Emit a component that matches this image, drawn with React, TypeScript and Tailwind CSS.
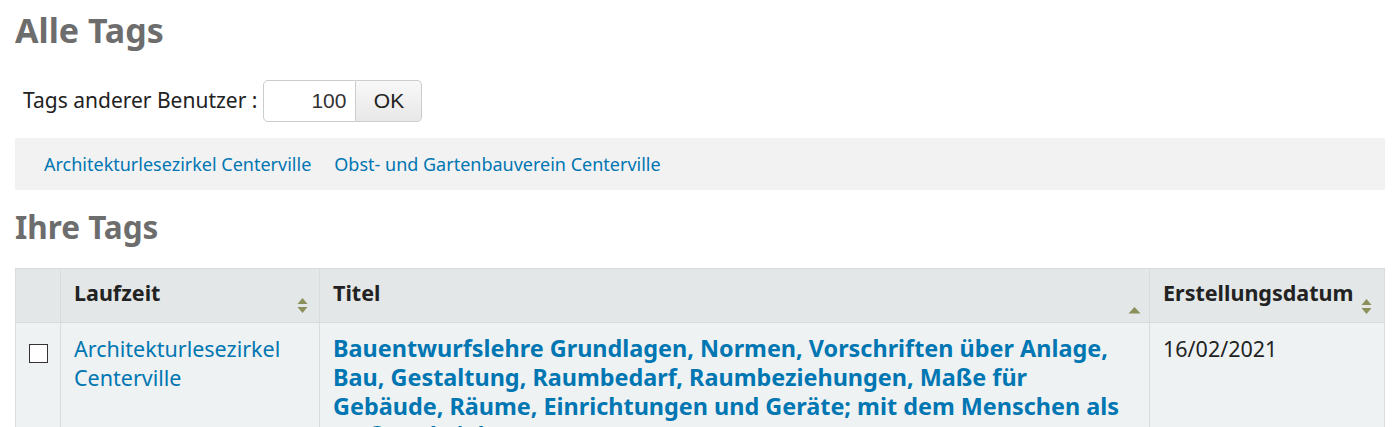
import React from "react";

const SortBoth = () => (
  <svg width="11" height="17" viewBox="0 0 11 17" className="block shrink-0">
    <path d="M5.5 1 L10.5 7 H0.5 Z" fill="#8b8f59" />
    <path d="M5.5 16 L10.5 10 H0.5 Z" fill="#8b8f59" />
  </svg>
);
const SortAsc = () => (
  <svg width="13" height="8" viewBox="0 0 13 8" className="block shrink-0">
    <path d="M6.5 1 L12.5 7.5 H0.5 Z" fill="#8b8f59" />
  </svg>
);

export default function App() {
  return (
    <div className="bg-white pl-[15px] pr-[11px] pt-[10px]" style={{ fontFamily: '"Noto Sans", sans-serif' }}>
      <h1 className="text-[34px] font-bold leading-[40px] text-[#6d6d6d]">Alle Tags</h1>
      <div className="mt-[30px] flex items-center pl-[8px]">
        <span className="text-[21px] text-[#222]">Tags anderer Benutzer :</span>
        <div className="ml-[6px] flex h-[42px]">
          <input
            readOnly
            value="100"
            className="w-[93px] rounded-l-[5px] border border-[#ccc] bg-white pr-[9px] text-right text-[21px] text-[#333] outline-none"
            style={{ fontFamily: '"Liberation Sans", Arial, sans-serif' }}
          />
          <button
            className="w-[66px] rounded-r-[5px] border border-l-0 border-[#ccc] bg-gradient-to-b from-[#f8f8f8] to-[#e8e8e8] text-[21px] text-[#222]"
            style={{ fontFamily: '"Liberation Sans", Arial, sans-serif' }}
          >
            OK
          </button>
        </div>
      </div>
      <div className="mt-[16px] flex h-[52px] items-center gap-[23px] bg-[#f2f2f2] pl-[29px] text-[18px] text-[#0076b2]">
        <a>Architekturlesezirkel Centerville</a>
        <a>Obst- und Gartenbauverein Centerville</a>
      </div>
      <h2 className="mt-[18px] text-[31.5px] font-bold leading-[38px] text-[#6d6d6d]">Ihre Tags</h2>
      <table className="mt-[22px] w-full table-fixed border-collapse">
        <colgroup>
          <col className="w-[45px]" />
          <col className="w-[259px]" />
          <col />
          <col className="w-[235px]" />
        </colgroup>
        <thead>
          <tr className="bg-[#e3e7e7] text-[21.5px] font-bold text-[#222]">
            <th className="h-[54px] border border-[#d8dcdc]"></th>
            <th className="border border-[#d8dcdc] pl-[13px] pr-[11px] text-left align-top">
              <div className="flex h-[52px] items-start justify-between pt-[11px]">
                <span className="leading-[26px]">Laufzeit</span>
                <span className="mt-[17px]"><SortBoth /></span>
              </div>
            </th>
            <th className="border border-[#d8dcdc] pl-[13px] pr-[8px] text-left align-top">
              <div className="flex h-[52px] items-start justify-between pt-[11px]">
                <span className="leading-[26px]">Titel</span>
                <span className="mt-[26px]"><SortAsc /></span>
              </div>
            </th>
            <th className="border border-[#d8dcdc] pl-[13px] pr-[12px] text-left align-top">
              <div className="flex h-[52px] items-start justify-between pt-[11px]">
                <span className="leading-[26px]">Erstellungsdatum</span>
                <span className="mt-[18px]"><SortBoth /></span>
              </div>
            </th>
          </tr>
        </thead>
        <tbody>
          <tr className="bg-[#eef2f3] align-top">
            <td className="border border-[#d8dcdc] pl-[13px] pt-[21px]">
              <div className="h-[19px] w-[19px] border-[1.5px] border-[#333] bg-white"></div>
            </td>
            <td className="border border-[#d8dcdc] pl-[13px] pr-[10px] pt-[11px] text-[21.5px] leading-[29px] text-[#0076b2]">
              <a>Architekturlesezirkel Centerville</a>
            </td>
            <td className="border border-[#d8dcdc] pl-[13px] pr-[12px] pt-[11px] text-[23.4px] font-bold leading-[29px] text-[#0076b2]">
              <a>
                Bauentwurfslehre Grundlagen, Normen, Vorschriften über Anlage, Bau, Gestaltung, Raumbedarf,
                Raumbeziehungen, Maße für Gebäude, Räume, Einrichtungen und Geräte; mit dem Menschen als
                Maß und Ziel
              </a>
            </td>
            <td className="border border-[#d8dcdc] pl-[13px] pt-[11px] text-[21.5px] leading-[29px] text-[#222]">
              16/02/2021
            </td>
          </tr>
        </tbody>
      </table>
    </div>
  );
}
